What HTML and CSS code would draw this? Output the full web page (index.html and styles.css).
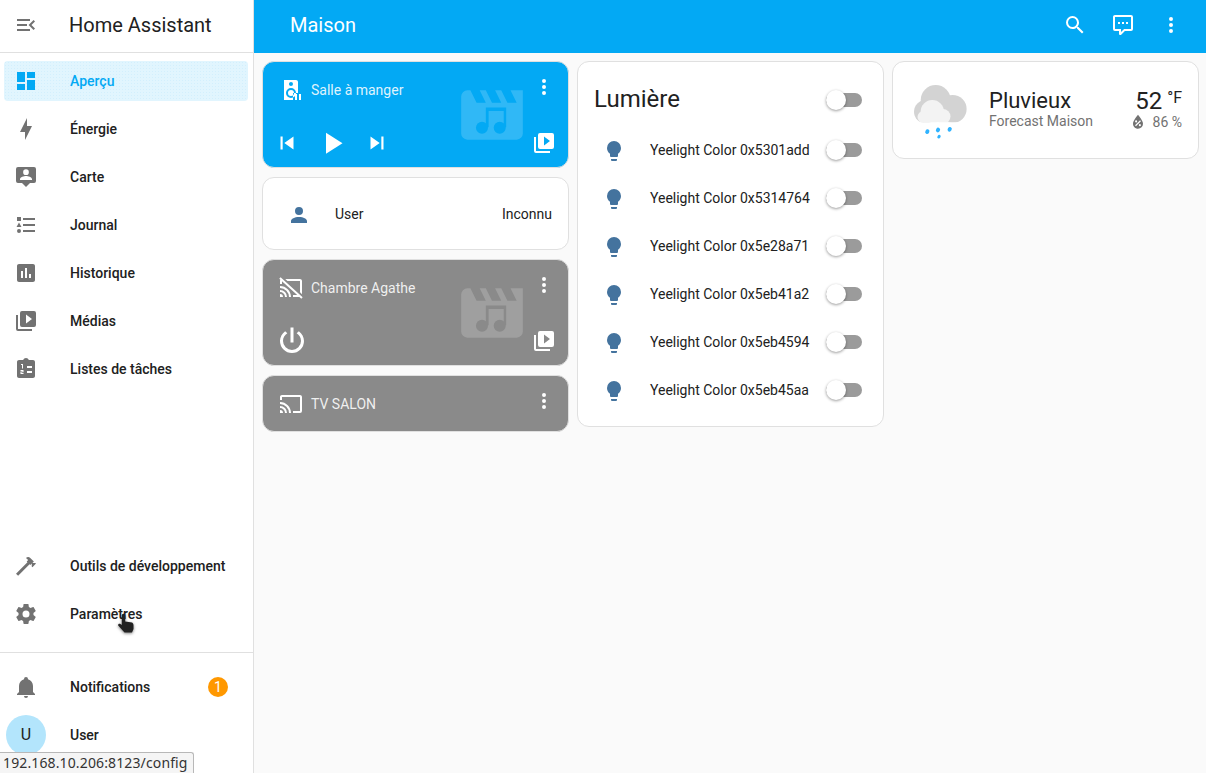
FILE: index.html
```html
<!DOCTYPE html>
<html lang="fr">

<head>
    <meta charset="UTF-8">
    <title>Maison - Home Assistant</title>
    <link rel="stylesheet" href="styles.css">
</head>

<body>
    <!-- shared icons -->
    <svg class="defs" width="0" height="0">
        <defs>
            <mask id="noteMask" maskUnits="userSpaceOnUse" x="0" y="0" width="24" height="24">
                <rect width="24" height="24" fill="#fff" />
                <path d="M10,16V9.6H16.6V16H15.8V10.7H10.9V16Z" fill="#000" />
                <circle cx="8.75" cy="16.1" r="1.95" fill="#000" />
                <circle cx="14.5" cy="16.1" r="1.95" fill="#000" />
            </mask>
        </defs>
        <symbol id="dots" viewBox="0 0 24 24"><path d="M12,16A2,2 0 0,1 14,18A2,2 0 0,1 12,20A2,2 0 0,1 10,18A2,2 0 0,1 12,16M12,10A2,2 0 0,1 14,12A2,2 0 0,1 12,14A2,2 0 0,1 10,12A2,2 0 0,1 12,10M12,4A2,2 0 0,1 14,6A2,2 0 0,1 12,8A2,2 0 0,1 10,6A2,2 0 0,1 12,4Z" /></symbol>
        <symbol id="playbox" viewBox="0 0 24 24"><path d="M4,6H2V20A2,2 0 0,0 4,22H18V20H4V6M20,2H8A2,2 0 0,0 6,4V16A2,2 0 0,0 8,18H20A2,2 0 0,0 22,16V4A2,2 0 0,0 20,2M12,14.5V5.5L18,10L12,14.5Z" /></symbol>
        <symbol id="movie" viewBox="0 0 24 24"><path mask="url(#noteMask)" d="M18,4L20,8H17L15,4H13L15,8H12L10,4H8L10,8H7L5,4H4A2,2 0 0,0 2,6V18A2,2 0 0,0 4,20H20A2,2 0 0,0 22,18V4H18Z" /></symbol>
        <symbol id="bulb" viewBox="0 0 24 24"><path d="M12,2A7,7 0 0,0 5,9C5,11.38 6.19,13.47 8,14.74V17A1,1 0 0,0 9,18H15A1,1 0 0,0 16,17V14.74C17.81,13.47 19,11.38 19,9A7,7 0 0,0 12,2M9,21A1,1 0 0,0 10,22H14A1,1 0 0,0 15,21V20H9V21Z" /></symbol>
    </svg>

    <aside class="sidebar">
        <div class="side-head">
            <svg class="icon" viewBox="0 0 24 24"><path d="M21,15.61L19.59,17L14.58,12L19.59,7L21,8.39L17.44,12L21,15.61M3,6H16V8H3V6M3,13V11H13V13H3M3,18V16H16V18H3Z" /></svg>
            <span class="side-title">Home Assistant</span>
        </div>
        <nav class="side-list">
            <a class="side-item active">
                <svg class="icon" viewBox="0 0 24 24"><path d="M13,3V9H21V3M13,21H21V11H13M3,21H11V15H3M3,13H11V3H3V13Z" /></svg>
                <span>Aperçu</span>
            </a>
            <a class="side-item">
                <svg class="icon" viewBox="0 0 24 24"><path d="M11 15H6L13 1V9H18L11 23V15Z" /></svg>
                <span>Énergie</span>
            </a>
            <a class="side-item">
                <svg class="icon" viewBox="0 0 24 24"><path d="M4,2H20A2,2 0 0,1 22,4V16A2,2 0 0,1 20,18H16L12,22L8,18H4A2,2 0 0,1 2,16V4A2,2 0 0,1 4,2M12,4.3A2.85,2.85 0 1,0 12,10A2.85,2.85 0 1,0 12,4.3M18,15V14C18,12 14,10.9 12,10.9C10,10.9 6,12 6,14V15H18Z" fill-rule="evenodd" /></svg>
                <span>Carte</span>
            </a>
            <a class="side-item">
                <svg class="icon" viewBox="0 0 24 24"><path d="M5,9.5L7.5,14H2.5L5,9.5M3,4H7V8H3V4M5,20A2,2 0 0,0 7,18A2,2 0 0,0 5,16A2,2 0 0,0 3,18A2,2 0 0,0 5,20M9,5V7H21V5H9M9,19H21V17H9V19M9,13H21V11H9V13Z" /></svg>
                <span>Journal</span>
            </a>
            <a class="side-item">
                <svg class="icon" viewBox="0 0 24 24"><path d="M9 17H7V10H9V17M13 17H11V7H13V17M17 17H15V13H17V17M19 3H5C3.9 3 3 3.9 3 5V19C3 20.1 3.9 21 5 21H19C20.1 21 21 20.1 21 19V5C21 3.9 20.1 3 19 3Z" /></svg>
                <span>Historique</span>
            </a>
            <a class="side-item">
                <svg class="icon" viewBox="0 0 24 24"><use href="#playbox" /></svg>
                <span>Médias</span>
            </a>
            <a class="side-item">
                <svg class="icon" viewBox="0 0 24 24">
                    <path d="M19 3H14.82C14.4 1.84 13.3 1 12 1S9.6 1.84 9.18 3H5C3.9 3 3 3.9 3 5V19C3 20.1 3.9 21 5 21H19C20.1 21 21 20.1 21 19V5C21 3.9 20.1 3 19 3Z" />
                    <path fill="#fff" d="M13,9H18V11H13V9M13,14H18V16H13V14M7,7H9V11.5H8V8H7V7M6.5,13H9.5V15.2H7.5V16H9.5V17H6.5V14.5H8.5V14H6.5V13Z" />
                </svg>
                <span>Listes de tâches</span>
            </a>
        </nav>
        <nav class="side-list side-bottom">
            <a class="side-item">
                <svg class="icon" viewBox="0 0 24 24"><path d="M2 19.63L13.43 8.2L12.72 7.5L14.14 6.07L12 3.89C13.2 2.7 15.09 2.7 16.27 3.89L19.87 7.5L18.45 8.91H21.29L22 9.62L18.45 13.21L17.74 12.5V9.62L16.27 11.04L15.56 10.33L4.13 21.76L2 19.63Z" /></svg>
                <span>Outils de développement</span>
            </a>
            <a class="side-item">
                <svg class="icon" viewBox="0 0 24 24"><path d="M12,15.5A3.5,3.5 0 0,1 8.5,12A3.5,3.5 0 0,1 12,8.5A3.5,3.5 0 0,1 15.5,12A3.5,3.5 0 0,1 12,15.5M19.43,12.97C19.47,12.65 19.5,12.33 19.5,12C19.5,11.67 19.47,11.34 19.43,11L21.54,9.37C21.73,9.22 21.78,8.95 21.66,8.73L19.66,5.27C19.54,5.05 19.27,4.96 19.05,5.05L16.56,6.05C16.04,5.66 15.5,5.32 14.87,5.07L14.5,2.42C14.46,2.18 14.25,2 14,2H10C9.75,2 9.54,2.18 9.5,2.42L9.13,5.07C8.5,5.32 7.96,5.66 7.44,6.05L4.95,5.05C4.73,4.96 4.46,5.05 4.34,5.27L2.34,8.73C2.21,8.95 2.27,9.22 2.46,9.37L4.57,11C4.53,11.34 4.5,11.67 4.5,12C4.5,12.33 4.53,12.65 4.57,12.97L2.46,14.63C2.27,14.78 2.21,15.05 2.34,15.27L4.34,18.73C4.46,18.95 4.73,19.03 4.95,18.95L7.44,17.94C7.96,18.34 8.5,18.68 9.13,18.93L9.5,21.58C9.54,21.82 9.75,22 10,22H14C14.25,22 14.46,21.82 14.5,21.58L14.87,18.93C15.5,18.67 16.04,18.34 16.56,17.94L19.05,18.95C19.27,19.03 19.54,18.95 19.66,18.73L21.66,15.27C21.78,15.05 21.73,14.78 21.54,14.63L19.43,12.97Z" /></svg>
                <span>Paramètres</span>
            </a>
        </nav>
        <nav class="side-list side-foot">
            <a class="side-item">
                <svg class="icon" viewBox="0 0 24 24"><path d="M21,19V20H3V19L5,17V11C5,7.9 7.03,5.17 10,4.29C10,4.19 10,4.1 10,4A2,2 0 0,1 12,2A2,2 0 0,1 14,4C14,4.1 14,4.19 14,4.29C16.97,5.17 19,7.9 19,11V17L21,19M14,21A2,2 0 0,1 12,23A2,2 0 0,1 10,21" /></svg>
                <span>Notifications</span>
                <b class="badge">1</b>
            </a>
            <a class="side-item user-item">
                <i class="avatar">U</i>
                <span>User</span>
            </a>
        </nav>
    </aside>

    <main class="main">
        <header class="topbar">
            <span class="top-title">Maison</span>
            <svg class="icon-white" viewBox="0 0 24 24"><path d="M9.5,3A6.5,6.5 0 0,1 16,9.5C16,11.11 15.41,12.59 14.44,13.73L14.71,14H15.5L20.5,19L19,20.5L14,15.5V14.71L13.73,14.44C12.59,15.41 11.11,16 9.5,16A6.5,6.5 0 0,1 3,9.5A6.5,6.5 0 0,1 9.5,3M9.5,5C7,5 5,7 5,9.5C5,12 7,14 9.5,14C12,14 14,12 14,9.5C14,7 12,5 9.5,5Z" /></svg>
            <svg class="icon-white" viewBox="0 0 24 24"><path d="M9,22A1,1 0 0,1 8,21V18H4A2,2 0 0,1 2,16V4C2,2.89 2.9,2 4,2H20A2,2 0 0,1 22,4V16A2,2 0 0,1 20,18H13.9L10.2,21.71C10,21.9 9.75,22 9.5,22V22H9M10,16V19.08L13.08,16H20V4H4V16H10M17,11H15V9H17V11M13,11H11V9H13V11M9,11H7V9H9V11Z" /></svg>
            <svg class="icon-white" viewBox="0 0 24 24"><use href="#dots" /></svg>
        </header>

        <div class="board">
            <div class="col">
                <section class="card media blue">
                    <svg class="media-bg"><use href="#movie" /></svg>
                    <div class="media-top">
                        <svg class="icon-white" viewBox="0 0 24 24">
                            <path d="M12,12A3,3 0 0,0 9,15A3,3 0 0,0 12,18A3,3 0 0,0 15,15A3,3 0 0,0 12,12M12,20A5,5 0 0,1 7,15A5,5 0 0,1 12,10A5,5 0 0,1 17,15A5,5 0 0,1 12,20M12,4A2,2 0 0,1 14,6A2,2 0 0,1 12,8C10.89,8 10,7.1 10,6C10,4.89 10.9,4 12,4M17,2H5V22H14V15H19V4C19,2.89 18.1,2 17,2Z" fill-rule="evenodd" />
                            <path d="M16,16H18V22H16V16M20,16H22V22H20V16Z" />
                        </svg>
                        <span class="media-name">Salle à manger</span>
                        <svg class="icon-white media-dots"><use href="#dots" /></svg>
                    </div>
                    <div class="media-bottom">
                        <svg class="ctl" viewBox="0 0 24 24"><path d="M6,18V6H8V18H6M9.5,12L18,6V18L9.5,12Z" /></svg>
                        <svg class="ctl-big" viewBox="0 0 24 24"><path d="M8,5.14V19.14L19,12.14L8,5.14Z" /></svg>
                        <svg class="ctl" viewBox="0 0 24 24"><path d="M16,18H18V6H16M6,18L14.5,12L6,6V18Z" /></svg>
                        <svg class="icon-white media-browse"><use href="#playbox" /></svg>
                    </div>
                </section>

                <section class="card entity">
                    <span class="state-icon">
                        <svg class="icon-blue" viewBox="0 0 24 24"><path d="M12,4A4,4 0 0,1 16,8A4,4 0 0,1 12,12A4,4 0 0,1 8,8A4,4 0 0,1 12,4M12,14C16.42,14 20,15.79 20,18V20H4V18C4,15.79 7.58,14 12,14Z" /></svg>
                    </span>
                    <span class="grow">User</span>
                    <span>Inconnu</span>
                </section>

                <section class="card media grey">
                    <svg class="media-bg"><use href="#movie" /></svg>
                    <div class="media-top">
                        <svg class="icon-white" viewBox="0 0 24 24"><path d="M1.6,1.27L0.25,2.75L1.41,3.8C1.16,4.13 1,4.55 1,5V8H3V5.23L18.2,19H14V21H20.41L22.31,22.72L23.65,21.24M6.27,3L8.47,5H21V16.34L23,18.16V5C23,3.89 22.1,3 21,3M1,10V12A9,9 0 0,1 10,21H12C12,14.92 7.08,10 1,10M1,14V16A5,5 0 0,1 6,21H8A7,7 0 0,0 1,14M1,18V21H4A3,3 0 0,0 1,18Z" /></svg>
                        <span class="media-name">Chambre Agathe</span>
                        <svg class="icon-white media-dots"><use href="#dots" /></svg>
                    </div>
                    <div class="media-bottom">
                        <svg class="ctl-big" viewBox="0 0 24 24"><path d="M16.56,5.44L15.11,6.89C16.84,7.94 18,9.83 18,12A6,6 0 0,1 12,18A6,6 0 0,1 6,12C6,9.83 7.16,7.94 8.88,6.88L7.44,5.44C5.36,6.88 4,9.28 4,12A8,8 0 0,0 12,20A8,8 0 0,0 20,12C20,9.28 18.64,6.88 16.56,5.44M13,3H11V13H13" /></svg>
                        <svg class="icon-white media-browse"><use href="#playbox" /></svg>
                    </div>
                </section>

                <section class="card media media-short grey">
                    <div class="media-top">
                        <svg class="icon-white" viewBox="0 0 24 24"><path d="M1,10V12A9,9 0 0,1 10,21H12C12,14.92 7.07,10 1,10M1,14V16A5,5 0 0,1 6,21H8A7,7 0 0,0 1,14M1,18V21H4A3,3 0 0,0 1,18M21,3H3C1.89,3 1,3.89 1,5V8H3V5H21V19H14V21H21A2,2 0 0,0 23,19V5C23,3.89 22.1,3 21,3Z" /></svg>
                        <span class="media-name">TV SALON</span>
                        <svg class="icon-white media-dots"><use href="#dots" /></svg>
                    </div>
                </section>
            </div>

            <div class="col">
                <section class="card lights">
                    <div class="lights-head">
                        <span class="grow">Lumière</span>
                        <span class="switch"></span>
                    </div>
                    <div class="light-row">
                        <span class="state-icon"><svg class="icon-blue"><use href="#bulb" /></svg></span>
                        <span class="grow">Yeelight Color 0x5301add</span>
                        <span class="switch"></span>
                    </div>
                    <div class="light-row">
                        <span class="state-icon"><svg class="icon-blue"><use href="#bulb" /></svg></span>
                        <span class="grow">Yeelight Color 0x5314764</span>
                        <span class="switch"></span>
                    </div>
                    <div class="light-row">
                        <span class="state-icon"><svg class="icon-blue"><use href="#bulb" /></svg></span>
                        <span class="grow">Yeelight Color 0x5e28a71</span>
                        <span class="switch"></span>
                    </div>
                    <div class="light-row">
                        <span class="state-icon"><svg class="icon-blue"><use href="#bulb" /></svg></span>
                        <span class="grow">Yeelight Color 0x5eb41a2</span>
                        <span class="switch"></span>
                    </div>
                    <div class="light-row">
                        <span class="state-icon"><svg class="icon-blue"><use href="#bulb" /></svg></span>
                        <span class="grow">Yeelight Color 0x5eb4594</span>
                        <span class="switch"></span>
                    </div>
                    <div class="light-row">
                        <span class="state-icon"><svg class="icon-blue"><use href="#bulb" /></svg></span>
                        <span class="grow">Yeelight Color 0x5eb45aa</span>
                        <span class="switch"></span>
                    </div>
                </section>
            </div>

            <div class="col">
                <section class="card weather">
                    <svg class="weather-icon" viewBox="0 0 54 54">
                        <clipPath id="cloudClip"><rect width="54" height="37.3" /></clipPath>
                        <g clip-path="url(#cloudClip)">
                            <g fill="#d3d3d3">
                                <circle cx="21.7" cy="15" r="15" />
                                <circle cx="38.6" cy="24" r="14" />
                                <circle cx="11.7" cy="26.7" r="11.7" />
                            </g>
                            <g fill="#f3f3f3">
                                <circle cx="18.3" cy="26.7" r="11.7" />
                                <circle cx="29" cy="31.5" r="7.5" />
                                <circle cx="9.5" cy="32" r="6" />
                            </g>
                        </g>
                        <g fill="#30b3ff">
                            <ellipse cx="13.3" cy="46.7" rx="2" ry="2.4" transform="rotate(30 13.3 46.7)" />
                            <ellipse cx="24" cy="45" rx="2" ry="2.4" transform="rotate(30 24 45)" />
                            <ellipse cx="35.7" cy="44.3" rx="2" ry="2.4" transform="rotate(30 35.7 44.3)" />
                            <ellipse cx="25" cy="51.7" rx="1.5" ry="1.9" transform="rotate(30 25 51.7)" />
                        </g>
                    </svg>
                    <div class="weather-info grow">
                        <div class="weather-state">Pluvieux</div>
                        <div class="weather-name">Forecast Maison</div>
                    </div>
                    <div class="weather-temp">
                        <div class="temp">52<sup>°F</sup></div>
                        <div class="humidity">
                            <svg viewBox="0 0 24 24"><path d="M12,3.25C12,3.25 6,10 6,14C6,17.32 8.69,20 12,20A6,6 0 0,0 18,14C18,10 12,3.25 12,3.25M14.47,9.97L15.53,11.03L9.53,17.03L8.47,15.97M9.75,10A1.25,1.25 0 0,1 11,11.25A1.25,1.25 0 0,1 9.75,12.5A1.25,1.25 0 0,1 8.5,11.25A1.25,1.25 0 0,1 9.75,10M14.25,14.5A1.25,1.25 0 0,1 15.5,15.75A1.25,1.25 0 0,1 14.25,17A1.25,1.25 0 0,1 13,15.75A1.25,1.25 0 0,1 14.25,14.5Z" /></svg>
                            <span>86 %</span>
                        </div>
                    </div>
                </section>
            </div>
        </div>
    </main>

    <!-- mouse pointer + browser status bubble sit over the page -->
    <svg class="pointer" viewBox="0 0 18 20"><path d="M6.5,.8C7.5,.8 8.2,1.5 8.2,2.5V8.5L15,9.5C16,10 16.5,11 16.5,12.5V16L15,19.5H7.5L1.2,12.5C.7,11.3 2,10.2 3,10.8L4.8,12V2.5C4.8,1.5 5.5,.8 6.5,.8Z" /></svg>
    <div class="status">192.168.10.206:8123/config</div>
</body>

</html>
```

FILE: styles.css
```css
* {
    box-sizing: border-box;
}

body {
    margin: 0;
    width: 1206px;
    height: 773px;
    display: flex;
    overflow: hidden;
    font-family: Roboto, "Liberation Sans", sans-serif;
    font-size: 14px;
    color: #212121;
    background: #fafafa;
}

.defs {
    position: absolute;
}

svg {
    display: block;
    flex: none;
    fill: currentColor;
}

.grow {
    flex: 1;
}

/* sidebar */
.sidebar {
    width: 254px;
    height: 773px;
    flex: none;
    display: flex;
    flex-direction: column;
    background: #fff;
    border-right: 1px solid #e0e0e0;
}

.side-head {
    height: 53px;
    display: flex;
    align-items: center;
    padding-left: 14px;
    padding-bottom: 2px;
    border-bottom: 1px solid #e0e0e0;
}

.side-title {
    margin-left: 31px;
    font-size: 20px;
}

.side-list {
    display: flex;
    flex-direction: column;
    gap: 8px;
    padding-top: 8px;
}

.side-bottom {
    margin-top: auto;
    padding-bottom: 18px;
    border-bottom: 1px solid #e0e0e0;
}

.side-foot {
    padding-top: 14px;
    padding-bottom: 18px;
}

.side-item {
    height: 40px;
    margin: 0 5px 0 4px;
    padding: 0 10px;
    display: flex;
    align-items: center;
    gap: 32px;
    border-radius: 4px;
    font-weight: 500;
}

.icon {
    width: 24px;
    height: 24px;
    color: #727272;
}

.side-item.active {
    color: #03a9f4;
    background-color: #e1f5fe;
    background-image: radial-gradient(#d2effd 0.6px, transparent 0.7px);
    background-size: 3px 3px;
}

.side-item.active .icon {
    color: #03a9f4;
}

.badge {
    margin-left: auto;
    margin-right: 10px;
    width: 20px;
    height: 20px;
    border-radius: 50%;
    background: #ff9800;
    color: #fff;
    font-weight: 400;
    text-align: center;
    line-height: 20px;
}

.user-item {
    padding-left: 2px;
    gap: 24px;
}

.avatar {
    width: 40px;
    height: 40px;
    border-radius: 50%;
    background: #b3e5fc;
    font-style: normal;
    font-weight: 400;
    font-size: 16px;
    text-align: center;
    line-height: 40px;
}

/* main */
.main {
    flex: 1;
    min-width: 0;
}

.topbar {
    height: 53px;
    display: flex;
    align-items: center;
    gap: 24px;
    padding: 0 23px 4px 36px;
    background: #03a9f4;
    color: #fff;
}

.top-title {
    flex: 1;
    font-size: 20px;
}

.icon-white {
    width: 24px;
    height: 24px;
    color: #fff;
}

.icon-blue {
    width: 24px;
    height: 24px;
    color: #44739e;
}

.board {
    display: grid;
    grid-template-columns: repeat(3, 1fr);
    gap: 8px;
    padding: 8px 7px 0 8px;
}

.col {
    display: flex;
    flex-direction: column;
    gap: 9px;
}

.card {
    background: #fff;
    border: 1px solid #e0e0e0;
    border-radius: 12px;
}

/* media player cards */
.media {
    position: relative;
    height: 107px;
    display: flex;
    flex-direction: column;
    justify-content: space-between;
    color: #fff;
    overflow: hidden;
}

.media.blue {
    background: #03a9f4;
}

.media.grey {
    background: #8a8a8a;
}

.media-short {
    height: 57px;
    justify-content: center;
}

.media-bg {
    position: absolute;
    top: 16px;
    left: 192px;
    width: 74px;
    height: 74px;
    color: rgba(255, 255, 255, 0.18);
}

.media-top {
    position: relative;
    display: flex;
    align-items: center;
    gap: 8px;
    padding: 16px 12px 0 16px;
}

.media-short .media-top {
    padding-top: 0;
}

.media-name {
    flex: 1;
    color: rgba(255, 255, 255, 0.88);
}

.media-dots {
    margin-top: -6px;
}

.media-bottom {
    position: relative;
    height: 36px;
    margin-bottom: 6px;
    display: flex;
    align-items: center;
    gap: 14px;
    padding: 0 12px 0 10.5px;
}

.ctl {
    width: 26px;
    height: 26px;
}

.ctl-big {
    width: 36px;
    height: 36px;
}

.media-browse {
    margin-left: auto;
}

/* entity row card */
.entity {
    height: 73px;
    display: flex;
    align-items: center;
    padding-left: 16px;
    padding-right: 16px;
}

.state-icon {
    width: 40px;
    height: 40px;
    margin-right: 16px;
    padding-top: 2px;
    display: flex;
    align-items: center;
    justify-content: center;
}

/* lights card */
.lights {
    height: 366px;
    padding: 0 21px 0 16px;
}

.lights-head {
    height: 64px;
    padding-top: 10px;
    display: flex;
    align-items: center;
    font-size: 24px;
}

.lights-head .switch {
    margin-top: 2px;
}

.light-row {
    height: 48px;
    display: flex;
    align-items: center;
}

.switch {
    position: relative;
    width: 36px;
    height: 14px;
    flex: none;
    border-radius: 7px;
    background: #9b9b9b;
}

.switch::after {
    content: "";
    position: absolute;
    top: -3px;
    left: 0;
    width: 20px;
    height: 20px;
    border-radius: 50%;
    background: #fff;
    box-shadow: 0 1px 3px rgba(0, 0, 0, 0.4);
}

/* weather card */
.weather {
    height: 98px;
    display: flex;
    align-items: center;
    padding: 0 16px 4px 21px;
}

.weather-icon {
    width: 54px;
    height: 54px;
    margin-top: 8px;
}

.weather-info {
    margin-left: 21px;
}

.weather-state {
    font-size: 22px;
    line-height: 26px;
}

.weather-name {
    color: #727272;
    line-height: 14px;
}

.weather-temp {
    text-align: right;
}

.temp {
    font-size: 24px;
    line-height: 28px;
    padding-top: 3px;
    margin-bottom: -3px;
}

.temp sup {
    margin-left: 5px;
    font-size: 16px;
    line-height: 0;
    vertical-align: 6px;
}

.humidity {
    display: flex;
    align-items: center;
    justify-content: flex-end;
    gap: 5px;
    color: #727272;
    line-height: 16px;
}

.humidity svg {
    width: 20px;
    height: 20px;
}

/* overlays */
.pointer {
    position: absolute;
    left: 117px;
    top: 613px;
    width: 18px;
    height: 20px;
    fill: #222;
    filter: drop-shadow(0 1px 1.5px rgba(0, 0, 0, 0.5));
}

.status {
    position: absolute;
    left: 0;
    bottom: 0;
    height: 21px;
    padding: 0 5px 0 3px;
    background: #f5f5f5;
    border: 1px solid #b8b8b8;
    border-left: 0;
    border-bottom: 0;
    border-top-right-radius: 3px;
    font-family: "Noto Sans", sans-serif;
    font-size: 14px;
    letter-spacing: 0.13px;
    line-height: 20px;
    color: #333;
}
```
